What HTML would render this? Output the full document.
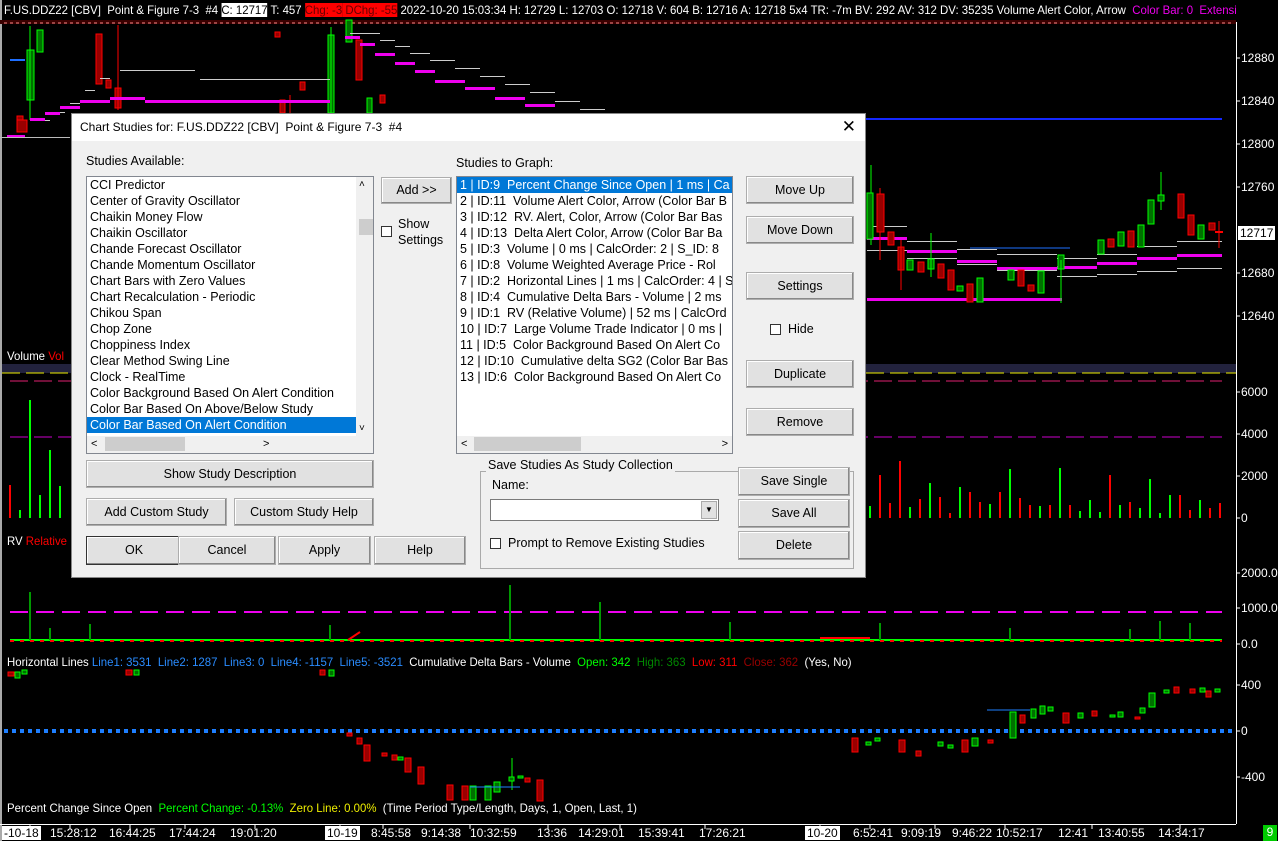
<!DOCTYPE html>
<html><head><meta charset="utf-8"><style>
*{margin:0;padding:0;box-sizing:border-box}
body{width:1278px;height:841px;background:#000;position:relative;overflow:hidden;font-family:"Liberation Sans",sans-serif}
.ct{position:absolute;font-family:"Liberation Sans Narrow","Liberation Sans",sans-serif;font-size:12px;color:#fff;white-space:nowrap;line-height:14px}
.hx{transform:scaleX(0.95);transform-origin:0 0}
.ax{position:absolute;left:1241px;font-family:"Liberation Sans Narrow","Liberation Sans",sans-serif;font-size:12px;color:#fff;line-height:12px}
.dlg{position:absolute;left:71px;top:113px;width:795px;height:465px;background:#f0f0f0;border:1px solid #888;font-size:12.5px;color:#000}
.tb{position:absolute;left:0;top:0;width:100%;height:27px;background:#fff;padding:6px 8px;font-size:12px}
.lb{position:absolute;background:#fff;border:1px solid #828790;overflow:hidden}
.lb div{height:16px;line-height:16px;padding-left:3px;white-space:nowrap}
.btn{position:absolute;background:#e1e1e1;border:1px solid #adadad;text-align:center;font-size:12.5px;box-shadow:inset -1px -1px 0 #888,inset 1px 1px 0 #fff}
.cb{position:absolute;width:11px;height:11px;border:1px solid #333;background:#fff}
.lbl{position:absolute;white-space:nowrap}
.sel{background:#0078d7;color:#fff}
</style></head><body>
<svg width="1278" height="841" style="position:absolute;left:0;top:0">
<rect x="0" y="0" width="2" height="841" fill="#aaa"/>
<line x1="1236.5" y1="0" x2="1236.5" y2="824" stroke="#fff"/>
<line x1="0" y1="824.5" x2="1236" y2="824.5" stroke="#fff"/>
<rect x="0" y="20" width="1236" height="4" fill="#3a0000"/>
<line x1="4" y1="23" x2="1232" y2="23" stroke="#f88" stroke-dasharray="3,3"/>
<line x1="10" y1="60" x2="25" y2="60" stroke="#1e6fff" stroke-width="2"/>
<rect x="27" y="50" width="7" height="50" fill="#007000" stroke="#0f0"/>
<line x1="30" y1="26" x2="30" y2="120" stroke="#0f0"/>
<rect x="37" y="30" width="6" height="22" fill="#007000" stroke="#0f0"/>
<rect x="17" y="116" width="6" height="6" fill="#900" stroke="#f00"/>
<rect x="17" y="120" width="10" height="12" fill="#900" stroke="#f00"/>
<rect x="7" y="135" width="18" height="2" fill="#e0e"/>
<rect x="0" y="137" width="70" height="1" fill="#bbb"/>
<g stroke="#f00" fill="#900"><rect x="96" y="34" width="6" height="50"/><rect x="106" y="80" width="5" height="8"/><rect x="115" y="88" width="6" height="20"/><line x1="118" y1="25" x2="118" y2="110"/><line x1="290" y1="95" x2="290" y2="113"/><rect x="280" y="100" width="5" height="13"/><rect x="275" y="32" width="5" height="5"/></g>
<g stroke="#0f0" fill="#007000"><rect x="328" y="35" width="6" height="78"/><line x1="331" y1="27" x2="331" y2="113"/><rect x="346" y="20" width="6" height="22"/><rect x="367" y="98" width="5" height="15"/></g>
<g stroke="#f00" fill="#900"><rect x="356" y="40" width="6" height="40"/><rect x="300" y="82" width="5" height="8"/><rect x="380" y="95" width="5" height="8"/></g>
<g fill="#ccc"><rect x="40" y="120" width="10" height="1"/><rect x="55" y="112" width="10" height="1"/><rect x="70" y="103" width="10" height="1"/><rect x="85" y="90" width="10" height="1"/><rect x="100" y="78" width="10" height="1"/><rect x="120" y="70" width="75" height="1"/><rect x="200" y="79" width="130" height="1"/><rect x="350" y="33" width="30" height="1"/><rect x="380" y="40" width="15" height="1"/><rect x="395" y="46" width="15" height="1"/><rect x="410" y="53" width="20" height="1"/><rect x="430" y="60" width="25" height="1"/><rect x="455" y="68" width="25" height="1"/><rect x="480" y="76" width="25" height="1"/><rect x="505" y="84" width="25" height="1"/><rect x="530" y="92" width="25" height="1"/><rect x="555" y="101" width="25" height="1"/><rect x="580" y="109" width="25" height="1"/></g>
<g fill="#e0e"><rect x="30" y="118" width="15" height="3"/><rect x="45" y="112" width="15" height="3"/><rect x="60" y="106" width="20" height="3"/><rect x="80" y="100" width="30" height="3"/><rect x="110" y="97" width="35" height="3"/><rect x="145" y="100" width="185" height="3"/><rect x="345" y="36" width="15" height="3"/><rect x="360" y="43" width="15" height="3"/><rect x="375" y="53" width="20" height="3"/><rect x="395" y="62" width="20" height="3"/><rect x="415" y="70" width="20" height="3"/><rect x="435" y="80" width="30" height="3"/><rect x="465" y="87" width="30" height="3"/><rect x="495" y="97" width="30" height="3"/><rect x="525" y="104" width="30" height="3"/></g>
<line x1="860" y1="119" x2="1222" y2="119" stroke="#1428ff" stroke-width="2"/>
<line x1="970" y1="248" x2="1070" y2="248" stroke="#1e6fff"/>
<rect x="867" y="298" width="195" height="3" fill="#e0e"/>
<g fill="#ccc"><rect x="867" y="226" width="40" height="1"/><rect x="907" y="241" width="50" height="1"/><rect x="957" y="249" width="40" height="1"/><rect x="997" y="254" width="60" height="1"/><rect x="1057" y="258" width="40" height="1"/><rect x="1097" y="254" width="40" height="1"/><rect x="1137" y="246" width="40" height="1"/><rect x="1177" y="241" width="45" height="1"/><rect x="867" y="250" width="40" height="1"/><rect x="907" y="258" width="50" height="1"/><rect x="957" y="264" width="40" height="1"/><rect x="997" y="270" width="60" height="1"/><rect x="1057" y="276" width="40" height="1"/><rect x="1097" y="274" width="40" height="1"/><rect x="1137" y="271" width="40" height="1"/><rect x="1177" y="268" width="45" height="1"/></g>
<g fill="#e0e"><rect x="867" y="237" width="40" height="3"/><rect x="907" y="250" width="50" height="3"/><rect x="957" y="260" width="40" height="3"/><rect x="997" y="267" width="60" height="3"/><rect x="1057" y="266" width="40" height="3"/><rect x="1097" y="262" width="40" height="3"/><rect x="1137" y="257" width="40" height="3"/><rect x="1177" y="254" width="45" height="3"/></g>
<g stroke="#f00" fill="#900">
<line x1="880" y1="188" x2="880" y2="260"/><rect x="877" y="194" width="7" height="38"/>
<rect x="888" y="232" width="6" height="13"/><rect x="898" y="247" width="6" height="23"/><line x1="901" y1="240" x2="901" y2="290"/>
<rect x="918" y="262" width="6" height="10"/><rect x="938" y="264" width="6" height="14"/><rect x="948" y="270" width="6" height="20"/>
<rect x="967" y="284" width="6" height="18"/><rect x="1018" y="270" width="6" height="16"/><rect x="1028" y="285" width="6" height="6"/>
<rect x="1108" y="239" width="6" height="8"/><rect x="1128" y="231" width="6" height="16"/><rect x="1178" y="194" width="6" height="24"/><rect x="1188" y="215" width="6" height="20"/><rect x="1209" y="223" width="6" height="7"/><line x1="1219" y1="221" x2="1219" y2="248"/><line x1="1215" y1="232" x2="1223" y2="232" stroke-width="2"/>
</g>
<g stroke="#0f0" fill="#007000">
<line x1="871" y1="165" x2="871" y2="245"/><rect x="867" y="193" width="6" height="46"/>
<rect x="907" y="260" width="6" height="10"/><rect x="928" y="259" width="6" height="10"/><line x1="931" y1="233" x2="931" y2="277"/>
<rect x="957" y="286" width="6" height="5"/><rect x="977" y="278" width="6" height="24"/><rect x="1008" y="270" width="6" height="10"/>
<rect x="1038" y="271" width="6" height="22"/><rect x="1058" y="255" width="6" height="14"/><line x1="1061" y1="260" x2="1061" y2="303"/>
<rect x="1098" y="240" width="6" height="14"/><rect x="1118" y="232" width="6" height="14"/><rect x="1138" y="225" width="6" height="22"/><rect x="1148" y="200" width="6" height="24"/><line x1="1161" y1="172" x2="1161" y2="210"/><rect x="1158" y="195" width="6" height="6"/><rect x="1198" y="225" width="6" height="14"/>
</g>
<rect x="2" y="364" width="1234" height="9" fill="#22223d"/>
<line x1="2" y1="373" x2="1236" y2="373" stroke="#ee0" stroke-dasharray="18,6"/>
<line x1="10" y1="381" x2="1222" y2="381" stroke="#e0206f" stroke-dasharray="18,6"/>
<line x1="10" y1="437" x2="1222" y2="437" stroke="#c0c" stroke-dasharray="18,6"/>
<g stroke="#0f0" stroke-width="2"><line x1="20" y1="518" x2="20" y2="510"/><line x1="30" y1="518" x2="30" y2="400"/><line x1="40" y1="518" x2="40" y2="495"/><line x1="50" y1="518" x2="50" y2="450"/><line x1="60" y1="518" x2="60" y2="486"/>
<line x1="870" y1="518" x2="870" y2="506"/><line x1="910" y1="518" x2="910" y2="507"/><line x1="930" y1="518" x2="930" y2="483"/><line x1="960" y1="518" x2="960" y2="487"/><line x1="990" y1="518" x2="990" y2="504"/><line x1="1010" y1="518" x2="1010" y2="469"/><line x1="1040" y1="518" x2="1040" y2="506"/><line x1="1060" y1="518" x2="1060" y2="468"/><line x1="1080" y1="518" x2="1080" y2="511"/><line x1="1090" y1="518" x2="1090" y2="500"/><line x1="1100" y1="518" x2="1100" y2="512"/><line x1="1120" y1="518" x2="1120" y2="505"/><line x1="1140" y1="518" x2="1140" y2="508"/><line x1="1150" y1="518" x2="1150" y2="479"/><line x1="1160" y1="518" x2="1160" y2="513"/><line x1="1170" y1="518" x2="1170" y2="495"/><line x1="1200" y1="518" x2="1200" y2="500"/></g>
<g stroke="#f00" stroke-width="2"><line x1="10" y1="518" x2="10" y2="485"/><line x1="880" y1="518" x2="880" y2="475"/><line x1="890" y1="518" x2="890" y2="503"/><line x1="900" y1="518" x2="900" y2="461"/><line x1="920" y1="518" x2="920" y2="499"/><line x1="940" y1="518" x2="940" y2="497"/><line x1="950" y1="518" x2="950" y2="513"/><line x1="970" y1="518" x2="970" y2="492"/><line x1="980" y1="518" x2="980" y2="502"/><line x1="1000" y1="518" x2="1000" y2="492"/><line x1="1020" y1="518" x2="1020" y2="498"/><line x1="1030" y1="518" x2="1030" y2="505"/><line x1="1050" y1="518" x2="1050" y2="505"/><line x1="1070" y1="518" x2="1070" y2="505"/><line x1="1110" y1="518" x2="1110" y2="475"/><line x1="1130" y1="518" x2="1130" y2="502"/><line x1="1180" y1="518" x2="1180" y2="495"/><line x1="1190" y1="518" x2="1190" y2="510"/><line x1="1210" y1="518" x2="1210" y2="508"/><line x1="1220" y1="518" x2="1220" y2="503"/></g>
<line x1="10" y1="612" x2="1222" y2="612" stroke="#e0e" stroke-width="2" stroke-dasharray="18,8"/>
<line x1="10" y1="640" x2="1222" y2="640" stroke="#0f0" stroke-width="2"/>
<line x1="10" y1="641" x2="1222" y2="641" stroke="#f00" stroke-dasharray="4,6" stroke-width="2"/>
<g stroke="#090" stroke-width="2"><line x1="30" y1="640" x2="30" y2="592"/><line x1="50" y1="640" x2="50" y2="628"/><line x1="90" y1="640" x2="90" y2="624"/><line x1="330" y1="640" x2="330" y2="625"/><line x1="510" y1="640" x2="510" y2="585"/><line x1="600" y1="640" x2="600" y2="602"/><line x1="730" y1="640" x2="730" y2="622"/><line x1="880" y1="640" x2="880" y2="623"/><line x1="1010" y1="640" x2="1010" y2="628"/><line x1="1130" y1="640" x2="1130" y2="629"/><line x1="1160" y1="640" x2="1160" y2="621"/><line x1="1190" y1="640" x2="1190" y2="623"/></g>
<line x1="820" y1="638" x2="870" y2="638" stroke="#f00" stroke-width="2"/>
<line x1="348" y1="640" x2="360" y2="632" stroke="#f00" stroke-width="2"/>
<line x1="4" y1="731" x2="1232" y2="731" stroke="#1e7fff" stroke-width="4" stroke-dasharray="4,4"/>
<g stroke="#f00" fill="#900"><rect x="8" y="672" width="6" height="4"/><rect x="126" y="670" width="6" height="5"/><rect x="320" y="670" width="5" height="5"/><rect x="347" y="733" width="5" height="3"/><rect x="357" y="738" width="5" height="6"/><rect x="364" y="745" width="6" height="16"/><rect x="382" y="753" width="5" height="3"/><rect x="392" y="755" width="5" height="5"/><rect x="405" y="758" width="6" height="14"/><rect x="418" y="767" width="6" height="17"/><rect x="447" y="785" width="6" height="15"/><rect x="462" y="786" width="6" height="14"/><rect x="525" y="778" width="5" height="4"/><rect x="537" y="780" width="6" height="21"/>
<rect x="852" y="738" width="6" height="14"/><rect x="899" y="740" width="6" height="12"/><rect x="916" y="751" width="5" height="5"/><rect x="962" y="740" width="6" height="12"/><rect x="988" y="740" width="5" height="3"/><rect x="1020" y="715" width="5" height="8"/><rect x="1063" y="713" width="6" height="10"/><rect x="1092" y="711" width="5" height="5"/><rect x="1135" y="717" width="5" height="2"/><rect x="1174" y="687" width="5" height="6"/><rect x="1190" y="689" width="5" height="4"/><rect x="1206" y="691" width="5" height="6"/></g>
<g stroke="#0f0" fill="#007000"><rect x="15" y="672" width="5" height="6"/><rect x="22" y="670" width="5" height="4"/><rect x="134" y="670" width="5" height="5"/><rect x="329" y="670" width="5" height="6"/><rect x="398" y="757" width="5" height="3"/><rect x="470" y="786" width="6" height="14"/><rect x="485" y="786" width="6" height="14"/><rect x="494" y="782" width="6" height="10"/><line x1="512" y1="758" x2="512" y2="790"/><rect x="509" y="777" width="5" height="4"/><rect x="518" y="776" width="5" height="2"/>
<rect x="866" y="742" width="5" height="3"/><rect x="875" y="738" width="5" height="3"/><rect x="938" y="742" width="5" height="4"/><rect x="948" y="745" width="5" height="3"/><rect x="972" y="738" width="6" height="8"/><rect x="1010" y="712" width="6" height="26"/><rect x="1031" y="709" width="5" height="9"/><rect x="1040" y="706" width="5" height="8"/><rect x="1048" y="707" width="5" height="4"/><rect x="1078" y="713" width="5" height="5"/><rect x="1110" y="715" width="5" height="2"/><rect x="1118" y="712" width="5" height="5"/><rect x="1140" y="708" width="5" height="5"/><rect x="1149" y="693" width="6" height="14"/><rect x="1164" y="690" width="5" height="3"/><rect x="1200" y="688" width="5" height="4"/><rect x="1215" y="689" width="5" height="3"/></g>
<line x1="987" y1="710" x2="1030" y2="710" stroke="#1e7fff"/>
<line x1="470" y1="787" x2="520" y2="787" stroke="#1e7fff"/>
<g stroke="#fff"><line x1="1236" y1="58" x2="1240" y2="58"/><line x1="1236" y1="101" x2="1240" y2="101"/><line x1="1236" y1="144" x2="1240" y2="144"/><line x1="1236" y1="187" x2="1240" y2="187"/><line x1="1236" y1="273" x2="1240" y2="273"/><line x1="1236" y1="316" x2="1240" y2="316"/><line x1="1236" y1="392" x2="1240" y2="392"/><line x1="1236" y1="434" x2="1240" y2="434"/><line x1="1236" y1="476" x2="1240" y2="476"/><line x1="1236" y1="518" x2="1240" y2="518"/><line x1="1236" y1="573" x2="1240" y2="573"/><line x1="1236" y1="608" x2="1240" y2="608"/><line x1="1236" y1="644" x2="1240" y2="644"/><line x1="1236" y1="685" x2="1240" y2="685"/><line x1="1236" y1="731" x2="1240" y2="731"/><line x1="1236" y1="777" x2="1240" y2="777"/></g>
<g stroke="#fff"><line x1="30" y1="825" x2="30" y2="829"/><line x1="70" y1="825" x2="70" y2="829"/><line x1="130" y1="825" x2="130" y2="829"/><line x1="185" y1="825" x2="185" y2="829"/><line x1="255" y1="825" x2="255" y2="829"/><line x1="340" y1="825" x2="340" y2="829"/><line x1="383" y1="825" x2="383" y2="829"/><line x1="470" y1="825" x2="470" y2="829"/><line x1="548" y1="825" x2="548" y2="829"/><line x1="620" y1="825" x2="620" y2="829"/><line x1="705" y1="825" x2="705" y2="829"/><line x1="820" y1="825" x2="820" y2="829"/><line x1="870" y1="825" x2="870" y2="829"/><line x1="935" y1="825" x2="935" y2="829"/><line x1="1005" y1="825" x2="1005" y2="829"/><line x1="1092" y1="825" x2="1092" y2="829"/><line x1="1180" y1="825" x2="1180" y2="829"/></g>
</svg>

<div class="ct hx" style="left:4px;top:3px">F.US.DDZ22 [CBV]&nbsp; Point &amp; Figure 7-3 &nbsp;#4 <span style="background:#fff;color:#000">C: 12717</span> T: 457 <span style="background:#f00;color:#600">Chg: -3</span><span style="background:#f00;color:#600"> DChg: -55</span> 2022-10-20 15:03:34 H: 12729 L: 12703 O: 12718 V: 604 B: 12716 A: 12718 5x4 TR: -7m BV: 292 AV: 312 DV: 35235 Volume Alert Color, Arrow&nbsp; <span style="color:#e0e">Color Bar: 0&nbsp; Extensio</span></div>
<div style="position:absolute;left:1236px;top:0;width:42px;height:22px;background:#000"></div>
<div class="ct hx" style="left:7px;top:349px">Volume <span style="color:#f00">Vol</span></div>
<div class="ct hx" style="left:7px;top:534px">RV <span style="color:#f00">Relative</span></div>
<div class="ct hx" style="left:7px;top:655px">Horizontal Lines <span style="color:#2a8cff">Line1: 3531&nbsp; Line2: 1287&nbsp; Line3: 0&nbsp; Line4: -1157&nbsp; Line5: -3521</span>&nbsp; Cumulative Delta Bars - Volume&nbsp; <span style="color:#0f0">Open: 342</span>&nbsp; <span style="color:#080">High: 363</span>&nbsp; <span style="color:#f00">Low: 311</span>&nbsp; <span style="color:#900">Close: 362</span>&nbsp; (Yes, No)</div>
<div class="ct hx" style="left:7px;top:801px">Percent Change Since Open&nbsp; <span style="color:#0f0">Percent Change: -0.13%</span>&nbsp; <span style="color:#ee0">Zero Line: 0.00%</span>&nbsp; (Time Period Type/Length, Days, 1, Open, Last, 1)</div>
<div class="ct" style="left:0;top:826px;width:1236px">
<span style="position:absolute;left:2px;background:#fff;color:#000;padding:0 2px">-10-18</span><span style="position:absolute;left:50px">15:28:12</span><span style="position:absolute;left:109px">16:44:25</span><span style="position:absolute;left:169px">17:44:24</span><span style="position:absolute;left:230px">19:01:20</span><span style="position:absolute;left:325px;background:#fff;color:#000;padding:0 2px">10-19</span><span style="position:absolute;left:371px">8:45:58</span><span style="position:absolute;left:421px">9:14:38</span><span style="position:absolute;left:470px">10:32:59</span><span style="position:absolute;left:537px">13:36</span><span style="position:absolute;left:578px">14:29:01</span><span style="position:absolute;left:638px">15:39:41</span><span style="position:absolute;left:699px">17:26:21</span><span style="position:absolute;left:805px;background:#fff;color:#000;padding:0 2px">10-20</span><span style="position:absolute;left:853px">6:52:41</span><span style="position:absolute;left:901px">9:09:19</span><span style="position:absolute;left:952px">9:46:22</span><span style="position:absolute;left:996px">10:52:17</span><span style="position:absolute;left:1058px">12:41</span><span style="position:absolute;left:1098px">13:40:55</span><span style="position:absolute;left:1158px">14:34:17</span></div>
<div class="ax" style="top:52px">12880</div><div class="ax" style="top:95px">12840</div><div class="ax" style="top:138px">12800</div><div class="ax" style="top:181px">12760</div>
<div class="ax" style="top:226px;left:1238px;background:#fff;color:#000;padding:1px 2px">12717</div>
<div class="ax" style="top:267px">12680</div><div class="ax" style="top:310px">12640</div>
<div class="ax" style="top:386px">6000</div><div class="ax" style="top:428px">4000</div><div class="ax" style="top:470px">2000</div><div class="ax" style="top:512px">0</div>
<div class="ax" style="top:567px">2000.0</div><div class="ax" style="top:602px">1000.0</div><div class="ax" style="top:638px">0.0</div>
<div class="ax" style="top:679px">400</div><div class="ax" style="top:725px">0</div><div class="ax" style="top:771px">-400</div>
<div style="position:absolute;left:1263px;top:825px;width:14px;height:16px;background:#0c0;color:#fff;font-size:12px;text-align:center">9</div>

<div class="dlg">
<div class="tb">Chart Studies for: F.US.DDZ22 [CBV]&nbsp; Point &amp; Figure 7-3&nbsp; #4<span style="position:absolute;right:9px;top:3px;font-size:17px">✕</span></div>
<div class="lbl" style="left:14px;top:40px">Studies Available:</div>
<div class="lb" style="left:14px;top:62px;width:288px;height:278px">
<div>CCI Predictor</div><div>Center of Gravity Oscillator</div><div>Chaikin Money Flow</div><div>Chaikin Oscillator</div><div>Chande Forecast Oscillator</div><div>Chande Momentum Oscillator</div><div>Chart Bars with Zero Values</div><div>Chart Recalculation - Periodic</div><div>Chikou Span</div><div>Chop Zone</div><div>Choppiness Index</div><div>Clear Method Swing Line</div><div>Clock - RealTime</div><div>Color Background Based On Alert Condition</div><div>Color Bar Based On Above/Below Study</div><div class="sel" style="margin-right:17px">Color Bar Based On Alert Condition</div>
<div style="position:absolute;right:0;top:0;width:17px;height:260px;background:#f0f0f0"><div style="position:absolute;top:42px;width:15px;height:16px;background:#cdcdcd"></div><span style="position:absolute;top:0;left:3px;font-size:10px">˄</span><span style="position:absolute;bottom:0;left:3px;font-size:10px">˅</span></div>
<div style="position:absolute;left:0;bottom:0;width:100%;height:17px;background:#f0f0f0"><div style="position:absolute;left:18px;top:1px;width:80px;height:14px;background:#cdcdcd"></div><span style="position:absolute;left:4px;top:0;font-size:11px">&lt;</span><span style="position:absolute;left:176px;top:0;font-size:11px">&gt;</span></div>
</div>
<div class="btn" style="left:309px;top:63px;width:71px;height:27px;line-height:25px">Add &gt;&gt;</div>
<div class="cb" style="left:309px;top:112px"></div>
<div class="lbl" style="left:326px;top:102px;line-height:16px">Show<br>Settings</div>
<div class="lbl" style="left:384px;top:42px">Studies to Graph:</div>
<div class="lb" style="left:384px;top:62px;width:277px;height:278px">
<div class="sel">1 | ID:9&nbsp; Percent Change Since Open | 1 ms | Ca</div><div>2 | ID:11&nbsp; Volume Alert Color, Arrow (Color Bar B</div><div>3 | ID:12&nbsp; RV. Alert, Color, Arrow (Color Bar Bas</div><div>4 | ID:13&nbsp; Delta Alert Color, Arrow (Color Bar Ba</div><div>5 | ID:3&nbsp; Volume | 0 ms | CalcOrder: 2 | S_ID: 8</div><div>6 | ID:8&nbsp; Volume Weighted Average Price - Rol</div><div>7 | ID:2&nbsp; Horizontal Lines | 1 ms | CalcOrder: 4 | S</div><div>8 | ID:4&nbsp; Cumulative Delta Bars - Volume | 2 ms</div><div>9 | ID:1&nbsp; RV (Relative Volume) | 52 ms | CalcOrd</div><div>10 | ID:7&nbsp; Large Volume Trade Indicator | 0 ms |</div><div>11 | ID:5&nbsp; Color Background Based On Alert Co</div><div>12 | ID:10&nbsp; Cumulative delta SG2 (Color Bar Bas</div><div>13 | ID:6&nbsp; Color Background Based On Alert Co</div>
<div style="position:absolute;left:0;bottom:0;width:100%;height:17px;background:#f0f0f0"><div style="position:absolute;left:17px;top:1px;width:107px;height:14px;background:#cdcdcd"></div><span style="position:absolute;left:4px;top:0;font-size:11px">&lt;</span><span style="position:absolute;right:4px;top:0;font-size:11px">&gt;</span></div>
</div>
<div class="btn" style="left:674px;top:62px;width:108px;height:28px;line-height:26px">Move Up</div>
<div class="btn" style="left:674px;top:102px;width:108px;height:28px;line-height:26px">Move Down</div>
<div class="btn" style="left:674px;top:158px;width:108px;height:28px;line-height:26px">Settings</div>
<div class="cb" style="left:698px;top:210px"></div><div class="lbl" style="left:716px;top:208px">Hide</div>
<div class="btn" style="left:674px;top:246px;width:108px;height:28px;line-height:26px">Duplicate</div>
<div class="btn" style="left:674px;top:294px;width:108px;height:28px;line-height:26px">Remove</div>
<div class="btn" style="left:14px;top:346px;width:288px;height:28px;line-height:26px">Show Study Description</div>
<div class="btn" style="left:14px;top:384px;width:141px;height:28px;line-height:26px">Add Custom Study</div>
<div class="btn" style="left:162px;top:384px;width:140px;height:28px;line-height:26px">Custom Study Help</div>
<div class="btn" style="left:14px;top:422px;width:96px;height:29px;line-height:27px;border:1px solid #333">OK</div>
<div class="btn" style="left:106px;top:422px;width:98px;height:29px;line-height:27px">Cancel</div>
<div class="btn" style="left:206px;top:422px;width:93px;height:29px;line-height:27px">Apply</div>
<div class="btn" style="left:302px;top:422px;width:92px;height:29px;line-height:27px">Help</div>
<div style="position:absolute;left:408px;top:357px;width:374px;height:98px;border:1px solid #aaa"></div>
<div class="lbl" style="left:414px;top:344px;background:#f0f0f0;padding:0 2px">Save Studies As Study Collection</div>
<div class="lbl" style="left:420px;top:364px">Name:</div>
<div style="position:absolute;left:418px;top:385px;width:229px;height:22px;background:#fff;border:1px solid #7a7a7a"><div style="position:absolute;right:1px;top:1px;width:16px;height:18px;background:#e1e1e1;border:1px solid #aaa;font-size:8px;text-align:center;line-height:16px">▼</div></div>
<div class="cb" style="left:418px;top:424px"></div><div class="lbl" style="left:436px;top:422px">Prompt to Remove Existing Studies</div>
<div class="btn" style="left:666px;top:353px;width:112px;height:29px;line-height:27px">Save Single</div>
<div class="btn" style="left:666px;top:385px;width:112px;height:29px;line-height:27px">Save All</div>
<div class="btn" style="left:666px;top:417px;width:112px;height:29px;line-height:27px">Delete</div>
</div>
</body></html>
